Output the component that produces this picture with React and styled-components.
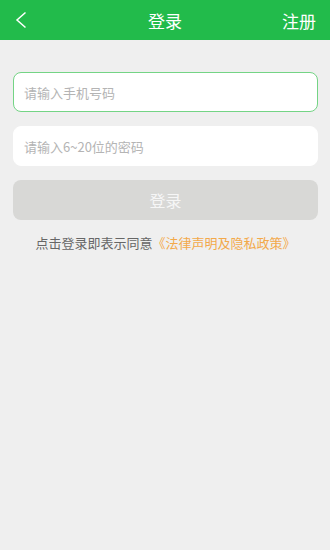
import React from 'react';
import styled, { createGlobalStyle } from 'styled-components';

const Global = createGlobalStyle`
  html, body {
    margin: 0;
    padding: 0;
    background: #efefef;
    font-family: "Noto Sans CJK SC", "Noto Sans", sans-serif;
  }
  * { box-sizing: border-box; }
`;

const Page = styled.div`
  width: 330px;
  min-height: 550px;
  background: #efefef;
`;

const Header = styled.div`
  height: 40px;
  background: #22bb4b;
  display: flex;
  align-items: center;
  justify-content: space-between;
  padding: 0 14px 0 15px;
  color: #fff;
  position: relative;
`;

const Title = styled.div`
  position: absolute;
  left: 0;
  right: 0;
  text-align: center;
  font-size: 17px;
  pointer-events: none;
`;

const Back = styled.button`
  background: none;
  border: none;
  padding: 0;
  display: flex;
  align-items: center;
  cursor: pointer;
`;

const Register = styled.span`
  font-size: 17px;
`;

const Form = styled.div`
  padding: 32px 12px 0 13px;
  display: flex;
  flex-direction: column;
`;

const Input = styled.input`
  height: 40px;
  width: 100%;
  border-radius: 8px;
  border: 1px solid ${p => (p.$active ? '#74d485' : '#ffffff')};
  background: #fff;
  padding: 0 10px;
  font-size: 13px;
  font-family: inherit;
  color: #333;
  outline: none;
  margin-bottom: ${p => p.$mb || 0}px;
  &::placeholder { color: #b4b4b4; }
`;

const Submit = styled.button`
  height: 40px;
  width: 100%;
  border: none;
  border-radius: 8px;
  background: #d8d8d6;
  color: #f6f6f6;
  font-size: 16px;
  font-family: inherit;
`;

const Agree = styled.p`
  margin: 13px 0 0;
  text-align: center;
  font-size: 13px;
  color: #666;
`;

const Link = styled.span`
  color: #f3a94a;
`;

export default function App() {
  return (
    <Page>
      <Global />
      <Header>
        <Back aria-label="返回">
          <svg width="12" height="18" viewBox="0 0 12 18">
            <path d="M10.5 1.5 L2 9 L10.5 16.5" fill="none" stroke="#fff" strokeWidth="1.5" />
          </svg>
        </Back>
        <Title>登录</Title>
        <Register>注册</Register>
      </Header>
      <Form>
        <Input $active $mb={14} placeholder="请输入手机号码" />
        <Input $mb={14} type="password" placeholder="请输入6~20位的密码" />
        <Submit>登录</Submit>
        <Agree>
          点击登录即表示同意<Link>《法律声明及隐私政策》</Link>
        </Agree>
      </Form>
    </Page>
  );
}
